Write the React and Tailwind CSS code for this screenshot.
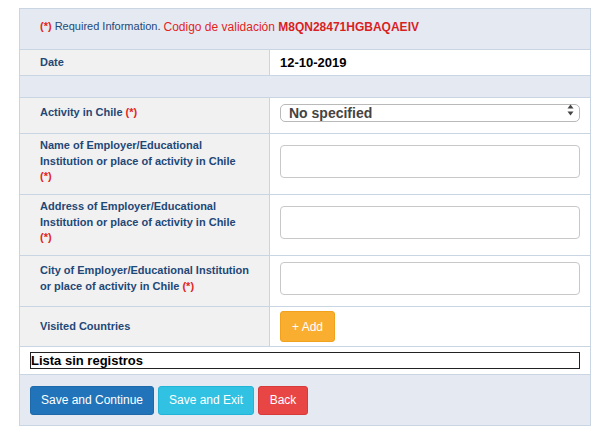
import React from "react";

const Req = () => <span className="font-bold text-[#e3241e]">(*)</span>;

function FieldRow({ label, height, shift = true, children }) {
  return (
    <div className={`flex border-b border-[#c9d5e3] ${height}`}>
      <div
        className={`w-[250px] shrink-0 bg-[#f1f1f1] border-r border-[#c9d5e3] pl-[20px] flex items-center ${
          shift ? "pb-[5px]" : ""
        }`}
      >
        <div className="text-[11px] font-bold leading-[15.5px] text-[#1f4877]">{label}</div>
      </div>
      <div className={`flex-1 bg-white px-[10px] flex items-center ${shift ? "pb-[5px]" : ""}`}>
        {children}
      </div>
    </div>
  );
}

const TextInput = () => (
  <input
    type="text"
    className="w-full h-[33px] border border-[#c8c8c8] rounded-[4px] bg-white outline-none"
  />
);

export default function App() {
  return (
    <div className="min-h-[440px] bg-white pt-[8px] font-['Liberation_Sans',Arial,sans-serif]">
      <div className="ml-[19px] w-[572px] border border-[#c9d5e3]">
        {/* Header */}
        <div className="h-[41px] flex items-center pb-[5px] pl-[20px] bg-[#e5eaf2] border-b border-[#c9d5e3] whitespace-nowrap">
          <span className="text-[11px] font-bold text-[#e3241e]">(*)</span>
          <span className="text-[11px] text-[#1f4877]">&nbsp;Required Information.&nbsp;</span>
          <span className="text-[12px] text-[#e3241e]">Codigo de validación&nbsp;</span>
          <span className="text-[12px] font-bold text-[#d91f1f]">M8QN28471HGBAQAEIV</span>
        </div>

        <FieldRow label="Date" height="h-[26px]" shift={false}>
          <span className="text-[13px] font-bold text-black">12-10-2019</span>
        </FieldRow>

        <div className="h-[22px] bg-[#e5eaf2] border-b border-[#c9d5e3]" />

        <FieldRow
          label={
            <>
              Activity in Chile <Req />
            </>
          }
          height="h-[36px]"
        >
          <div className="relative w-full">
            <select className="w-full h-[18px] appearance-none border border-[#b9b9b9] rounded-[5px] bg-white pl-[8px] text-[14px] leading-[16px] font-bold text-[#444] outline-none">
              <option>No specified</option>
            </select>
            <svg
              className="absolute right-[6px] top-[3px] pointer-events-none"
              width="7"
              height="12"
              viewBox="0 0 7 12"
            >
              <path d="M3.5 0.5 L6.5 4.5 L0.5 4.5 Z" fill="#444" />
              <path d="M3.5 11.5 L6.5 7.5 L0.5 7.5 Z" fill="#444" />
            </svg>
          </div>
        </FieldRow>

        <FieldRow
          label={
            <>
              Name of Employer/Educational
              <br />
              Institution or place of activity in Chile
              <br />
              <Req />
            </>
          }
          height="h-[61px]"
        >
          <TextInput />
        </FieldRow>

        <FieldRow
          label={
            <>
              Address of Employer/Educational
              <br />
              Institution or place of activity in Chile
              <br />
              <Req />
            </>
          }
          height="h-[61px]"
        >
          <TextInput />
        </FieldRow>

        <FieldRow
          label={
            <>
              City of Employer/Educational Institution
              <br />
              or place of activity in Chile <Req />
            </>
          }
          height="h-[51px]"
        >
          <TextInput />
        </FieldRow>

        <FieldRow label="Visited Countries" height="h-[40px]" shift={false}>
          <button className="w-[55px] h-[31px] rounded-[3px] border border-[#f0a21e] bg-[#f9ae30] text-[12px] text-white">
            + Add
          </button>
        </FieldRow>

        {/* Empty list */}
        <div className="h-[28px] flex items-center px-[10px] bg-white border-b border-[#c9d5e3]">
          <div className="w-full h-[17px] border border-[#222] text-[13px] leading-[15px] font-bold text-black">
            Lista sin registros
          </div>
        </div>

        {/* Actions */}
        <div className="h-[50px] flex items-center gap-[4px] pl-[10px] bg-[#e5eaf2]">
          <button className="w-[124px] h-[29px] rounded-[3px] border border-[#1d69a9] bg-[#2174b9] text-[12px] text-white">
            Save and Continue
          </button>
          <button className="w-[96px] h-[29px] rounded-[3px] border border-[#22b4d7] bg-[#31c1e2] text-[12px] text-white">
            Save and Exit
          </button>
          <button className="w-[50px] h-[29px] rounded-[3px] border border-[#d63a3a] bg-[#e84545] text-[12px] text-white">
            Back
          </button>
        </div>
      </div>
    </div>
  );
}
